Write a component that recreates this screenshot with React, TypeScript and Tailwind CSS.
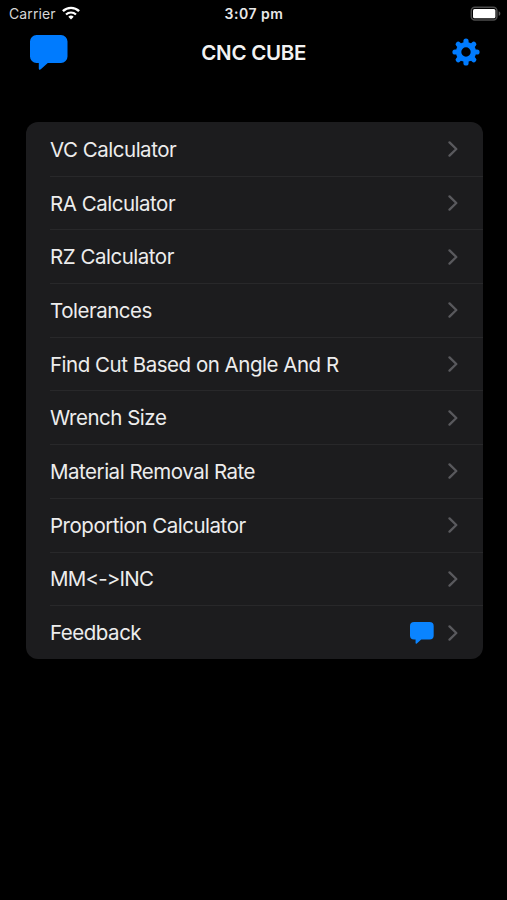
const MENU_ITEMS = [
  { label: 'VC Calculator' },
  { label: 'RA Calculator' },
  { label: 'RZ Calculator' },
  { label: 'Tolerances' },
  { label: 'Find Cut Based on Angle And R' },
  { label: 'Wrench Size' },
  { label: 'Material Removal Rate' },
  { label: 'Proportion Calculator' },
  { label: 'MM<->INC', tight: true },
  { label: 'Feedback', bubble: true },
]

const TEETH = [0, 45, 90, 135, 180, 225, 270, 315]

function BubbleIcon({ className }: { className: string }) {
  return (
    <svg viewBox="0 0 38 35" preserveAspectRatio="none" className={className} aria-hidden="true">
      <path
        d="M6.5 0H31a6.5 6.5 0 0 1 6.5 6.5v15A6.5 6.5 0 0 1 31 28H17.8l-7 6.2c-.9.8-2 .5-2-.8V28H6.5A6.5 6.5 0 0 1 0 21.5v-15A6.5 6.5 0 0 1 6.5 0Z"
        fill="currentColor"
      />
    </svg>
  )
}

function GearIcon() {
  return (
    <svg viewBox="-14 -14 28 28" className="h-7 w-7 text-[#007bfe]" aria-hidden="true">
      <circle r="7.4" fill="none" stroke="currentColor" strokeWidth="5.4" />
      {TEETH.map((angle) => (
        <path
          key={angle}
          d="M0 -8V-11"
          stroke="currentColor"
          strokeWidth="5.2"
          strokeLinecap="round"
          transform={`rotate(${angle})`}
        />
      ))}
    </svg>
  )
}

function WifiIcon() {
  return (
    <svg viewBox="0 0 18 14" className="h-3.5 w-[18px]" fill="none" stroke="white" aria-hidden="true">
      <path d="M0.9 5.2A11.6 11.6 0 0 1 17.1 5.2" strokeWidth="2.4" />
      <path d="M4 8.5A7.2 7.2 0 0 1 14 8.5" strokeWidth="2.2" />
      <path d="M9 13.5 6.3 10.8A3.9 3.9 0 0 1 11.7 10.8Z" fill="white" stroke="none" />
    </svg>
  )
}

function BatteryIcon() {
  return (
    <svg viewBox="0 0 31 15" className="h-[15px] w-[31px]" aria-hidden="true">
      <rect x="1.3" y="1.2" width="25.6" height="12.8" rx="3.5" fill="none" stroke="#4c4c4c" strokeWidth="1.5" />
      <rect x="3" y="3" width="22.4" height="9.3" rx="1.5" fill="white" />
      <path d="M28.7 5.2c2.2.8 2.2 3.8 0 4.6Z" fill="#5a5a5a" />
    </svg>
  )
}

function Chevron() {
  return (
    <svg viewBox="0 0 10 16" className="h-4 w-2.5" aria-hidden="true">
      <path
        d="M1.5 1.4 8.3 8 1.5 14.6"
        fill="none"
        stroke="#59595d"
        strokeWidth="2.3"
        strokeLinecap="round"
        strokeLinejoin="round"
      />
    </svg>
  )
}

function StatusBar() {
  return (
    <div className="grid h-[26px] grid-cols-[1fr_auto_1fr] items-center pl-[9px] pr-[6px]">
      <div className="flex items-center gap-[6px]">
        <span className="text-[14px] tracking-[0.1px] text-[#d6d6d6]">Carrier</span>
        <WifiIcon />
      </div>
      <span className="pr-[2px] text-[14px] font-semibold tracking-[0.5px] text-[#e8e8e8]">
        3:07 pm
      </span>
      <div className="flex justify-end">
        <BatteryIcon />
      </div>
    </div>
  )
}

export default function App() {
  return (
    <div className="h-[900px] w-[507px] overflow-hidden bg-black font-['Inter',sans-serif]">
      <StatusBar />

      <header className="mt-0.5 grid h-12 grid-cols-[1fr_auto_1fr] items-center pl-[29.5px] pr-[27px]">
        <BubbleIcon className="h-[35px] w-[38px] text-[#007bfe]" />
        <h1 className="pr-0.5 pt-[2px] text-[20.5px] font-[560] tracking-[-0.25px] text-[#f2f2f2]">
          CNC CUBE
        </h1>
        <div className="flex justify-end">
          <GearIcon />
        </div>
      </header>

      <ul className="ml-[25.5px] mr-[24.5px] mt-[46px] overflow-hidden rounded-[12px] bg-[#1c1c1e]">
        {MENU_ITEMS.map((item, i) => (
          <li key={item.label} className="pl-[24.5px]">
            <div
              className={`flex h-[53.7px] items-center pr-[25px] ${
                i > 0 ? 'border-t border-[#28282a]' : 'pt-px'
              }`}
            >
              <span
                className={`flex-1 pt-[2px] text-[20.5px] text-[#ededed] ${
                  item.tight ? 'tracking-[-0.8px]' : 'tracking-[-0.48px]'
                }`}
              >
                {item.label}
              </span>
              {item.bubble && <BubbleIcon className="mr-3.5 h-[22px] w-6 text-[#0a84ff]" />}
              <Chevron />
            </div>
          </li>
        ))}
      </ul>
    </div>
  )
}
